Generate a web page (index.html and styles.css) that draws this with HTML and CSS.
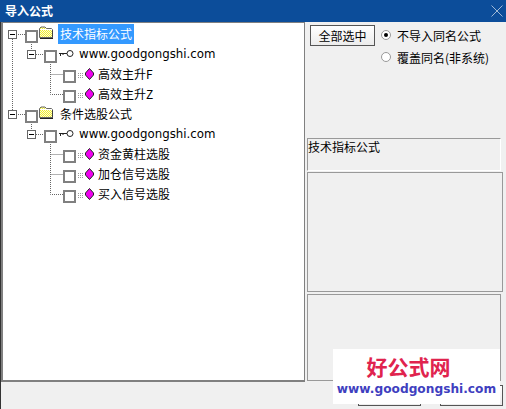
FILE: index.html
```html
<!DOCTYPE html>
<html lang="zh">
<head>
<meta charset="utf-8">
<title>导入公式</title>
<link rel="stylesheet" href="styles.css">
</head>
<body>
<div class="window">
  <header class="titlebar">
    <span class="title">导入公式</span>
    <svg class="close" width="12" height="12" viewBox="0 0 12 12"><path d="M0.5 0.5L11.5 11.5M11.5 0.5L0.5 11.5" stroke="#9fb8d6" fill="none"/></svg>
  </header>
  <main class="main">
    <section class="tree">
      <svg class="lines" width="120" height="220" viewBox="0 0 120 220">
        <defs>
          <pattern id="dither" width="2" height="2" patternUnits="userSpaceOnUse"><rect width="2" height="2" fill="#f0ec30"/><rect width="1" height="1" fill="#fdfdd8"/><rect x="1" y="1" width="1" height="1" fill="#fdfdd8"/></pattern>
        </defs>
        <g stroke="#666" stroke-dasharray="1 1" fill="none">
          <path d="M12.5 39V114"/><path d="M18 34.5H25"/><path d="M31.5 44V50"/>
          <path d="M36 54.5H44"/><path d="M50.5 64V94.5H63"/><path d="M50.5 74.5H63"/>
          <path d="M18 114.5H25"/><path d="M31.5 124V130"/><path d="M36 134.5H44"/>
          <path d="M50.5 144V194.5H63"/><path d="M50.5 154.5H63"/><path d="M50.5 174.5H63"/>
        </g>
      </svg>
      <div class="row lv1">
        <span class="toggle"></span><span class="check"></span>
        <svg class="folder" width="14" height="13" viewBox="0 0 14 13"><path d="M0.5 11.5V2.5L2 1H6L7.5 2.5H12.5L13.5 3.5V11.5H0.5Z" fill="url(#dither)" stroke="#666"/><path d="M1 3.5H13" stroke="#fff"/><path d="M1 12.5H14V4" stroke="#222" fill="none"/></svg>
        <span class="label selected">技术指标公式</span>
      </div>
      <div class="row lv2">
        <span class="toggle"></span><span class="check"></span>
        <svg class="key" width="15" height="9" viewBox="0 0 15 9"><path d="M0 4.5H8M1.5 4.5V7M4 4.5V6" stroke="#222" fill="none"/><circle cx="11" cy="4.5" r="3" fill="#fff" stroke="#222"/></svg>
        <span class="label url">www.goodgongshi.com</span>
      </div>
      <div class="row lv3">
        <span class="check"></span>
        <svg class="grip" width="16" height="12" viewBox="0 0 16 12"><path d="M0 5.5H6M0 7.5H6M0 9.5H6" stroke="#999" stroke-dasharray="1 1"/><path d="M11.5 0.5L15.5 5V7L11.5 11.5L7.5 7V5Z" fill="#f000f0" stroke="#222"/></svg>
        <span class="label">高效主升F</span>
      </div>
      <div class="row lv3">
        <span class="check"></span>
        <svg class="grip" width="16" height="12" viewBox="0 0 16 12"><path d="M0 5.5H6M0 7.5H6M0 9.5H6" stroke="#999" stroke-dasharray="1 1"/><path d="M11.5 0.5L15.5 5V7L11.5 11.5L7.5 7V5Z" fill="#f000f0" stroke="#222"/></svg>
        <span class="label">高效主升Z</span>
      </div>
      <div class="row lv1">
        <span class="toggle"></span><span class="check"></span>
        <svg class="folder" width="14" height="13" viewBox="0 0 14 13"><path d="M0.5 11.5V2.5L2 1H6L7.5 2.5H12.5L13.5 3.5V11.5H0.5Z" fill="url(#dither)" stroke="#666"/><path d="M1 3.5H13" stroke="#fff"/><path d="M1 12.5H14V4" stroke="#222" fill="none"/></svg>
        <span class="label">条件选股公式</span>
      </div>
      <div class="row lv2">
        <span class="toggle"></span><span class="check"></span>
        <svg class="key" width="15" height="9" viewBox="0 0 15 9"><path d="M0 4.5H8M1.5 4.5V7M4 4.5V6" stroke="#222" fill="none"/><circle cx="11" cy="4.5" r="3" fill="#fff" stroke="#222"/></svg>
        <span class="label url">www.goodgongshi.com</span>
      </div>
      <div class="row lv3">
        <span class="check"></span>
        <svg class="grip" width="16" height="12" viewBox="0 0 16 12"><path d="M0 5.5H6M0 7.5H6M0 9.5H6" stroke="#999" stroke-dasharray="1 1"/><path d="M11.5 0.5L15.5 5V7L11.5 11.5L7.5 7V5Z" fill="#f000f0" stroke="#222"/></svg>
        <span class="label">资金黄柱选股</span>
      </div>
      <div class="row lv3">
        <span class="check"></span>
        <svg class="grip" width="16" height="12" viewBox="0 0 16 12"><path d="M0 5.5H6M0 7.5H6M0 9.5H6" stroke="#999" stroke-dasharray="1 1"/><path d="M11.5 0.5L15.5 5V7L11.5 11.5L7.5 7V5Z" fill="#f000f0" stroke="#222"/></svg>
        <span class="label">加仓信号选股</span>
      </div>
      <div class="row lv3">
        <span class="check"></span>
        <svg class="grip" width="16" height="12" viewBox="0 0 16 12"><path d="M0 5.5H6M0 7.5H6M0 9.5H6" stroke="#999" stroke-dasharray="1 1"/><path d="M11.5 0.5L15.5 5V7L11.5 11.5L7.5 7V5Z" fill="#f000f0" stroke="#222"/></svg>
        <span class="label">买入信号选股</span>
      </div>
    </section>
    <aside class="side">
      <div class="controls">
        <button class="btn select-all" type="button">全部选中</button>
        <div class="radios">
          <label class="radio"><span class="dot on"></span>不导入同名公式</label>
          <label class="radio"><span class="dot"></span>覆盖同名(非系统)</label>
        </div>
      </div>
      <div class="panel name">技术指标公式</div>
      <div class="panel mid"></div>
      <div class="panel low"></div>
    </aside>
  </main>
  <footer class="footer">
    <button class="btn foot" type="button"></button>
    <button class="btn foot" type="button"></button>
  </footer>
  <div class="mark">
    <div class="mark-title">好公式网</div>
    <div class="mark-url">www.goodgongshi.com</div>
  </div>
</div>
</body>
</html>
```
FILE: styles.css
```css
html, body { margin: 0; padding: 0; }
body { width: 506px; height: 409px; overflow: hidden; background: #f0f0f0; font-family: "Noto Sans CJK SC", "Liberation Sans", sans-serif; font-size: 12px; color: #000; }
.window { position: relative; width: 506px; height: 409px; display: flex; flex-direction: column; border-left: 1px solid #333; box-sizing: border-box; }
.titlebar { height: 22px; flex: none; background: #0c4d9a; display: flex; align-items: center; justify-content: space-between; padding: 0 3px 0 5px; margin-left: -1px; }
.title { color: #fff; font-weight: 700; font-size: 12px; line-height: 20px; }
.close { margin-top: -1px; }
.main { display: flex; height: 360px; flex: none; }
.tree { position: relative; width: 304px; box-sizing: border-box; background: #fff; border: 1px solid #808080; border-width: 1px 1px 2px 2px; padding-top: 1px; }
.lines { position: absolute; left: -3px; top: -23px; pointer-events: none; }
.row { height: 20px; display: flex; align-items: center; position: relative; }
.lv1 { padding-left: 5px; }
.lv2 { padding-left: 24px; }
.lv3 { padding-left: 60px; }
.toggle { width: 9px; height: 9px; box-sizing: border-box; border: 1px solid #666; background: linear-gradient(#000,#000) center / 5px 1px no-repeat #fff; flex: none; margin: 1px 8px 0 0; }
.check { width: 13px; height: 13px; box-sizing: border-box; border: 2px solid #808080; background: #fff; flex: none; margin-top: 5px; }
.folder { flex: none; margin: -3px 0 0 1px; }
.key { flex: none; margin: -1px 0 0 2px; }
.grip { flex: none; margin: 0 0 0 2px; }
.label { line-height: 20px; padding: 0 2px; margin-left: 3px; white-space: nowrap; }
.lv1 .label { margin-left: 5px; }
.lv3 .label { margin-left: 2px; }
.selected { background: #3399ff; color: #fff; }
.url { font-family: "DejaVu Sans", sans-serif; font-size: 11.8px; }
.side { flex: 1; padding: 3px 3px 0 2px; display: flex; flex-direction: column; min-width: 0; }
.controls { display: flex; height: 113px; flex: none; padding-left: 3px; }
.btn { box-sizing: border-box; background: linear-gradient(#fff, #ececec); border: 1px solid #555; border-radius: 0; padding: 0; font: inherit; color: #000; }
.select-all { width: 65px; height: 21px; flex: none; line-height: 18px; }
.radios { margin-left: 6px; display: flex; flex-direction: column; gap: 2px; }
.radio { display: flex; align-items: center; height: 20px; gap: 6px; }
.dot { width: 10px; height: 10px; box-sizing: border-box; border: 1px solid #999; border-radius: 50%; background: #fff; position: relative; flex: none; }
.dot.on::after { content: ""; position: absolute; left: 2px; top: 2px; width: 4px; height: 4px; border-radius: 50%; background: #000; }
.panel { box-sizing: border-box; border: 1px solid #999; background: #f0f0f0; }
.name { width: 194px; height: 33px; line-height: 16px; padding-left: 0; border-bottom-color: #fff; border-right-color: #fff; }
.mid { width: 196px; height: 120px; margin-top: 1px; }
.low { width: 194px; height: 87px; margin-top: 2px; }
.footer { flex: 1; display: flex; justify-content: flex-end; gap: 19px; padding: 0 3px 3px 0; align-items: flex-end; }
.foot { width: 63px; height: 21px; }
.mark { position: absolute; left: 332px; top: 349px; width: 167px; height: 55px; background: #fff; text-align: center; }
.mark-title { color: #e0234e; font-weight: 700; font-size: 21px; line-height: 28px; margin-top: 3px; padding-right: 16px; }
.mark-url { color: #3f3fbf; font-family: "DejaVu Sans", sans-serif; font-weight: 700; font-size: 12.2px; line-height: 18px; white-space: nowrap; }
```
